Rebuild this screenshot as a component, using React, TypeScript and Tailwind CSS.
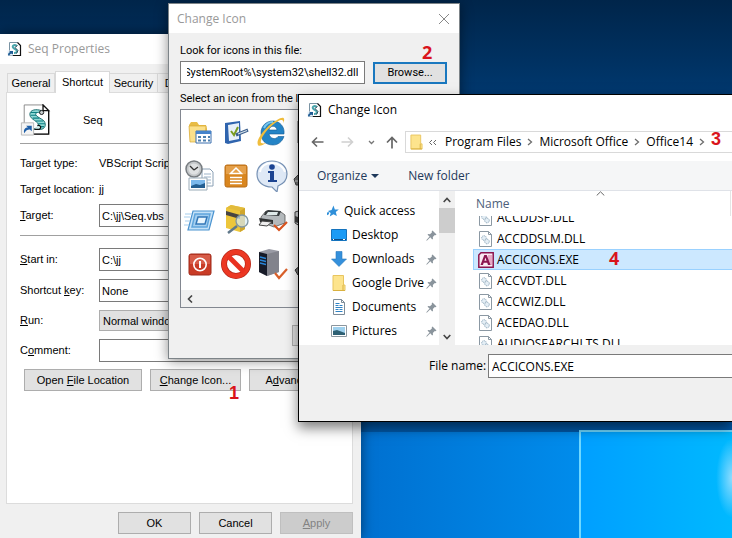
import { useEffect, useRef } from "react";
import type { ReactNode } from "react";

function ScriptIcon({ className }: { className: string }) {
  return (
    <svg viewBox="0 0 32 34" className={className}>
      <path d="M4 1h20l6 6v25H4z" fill="#fff" stroke="#888" />
      <path d="M30 7v25H5M24 1v6h6z" fill="none" stroke="#111" strokeWidth="1.4" />
      <path
        d="M22 7c-5-2-12-1-12 4 0 6 10 7 9 12-1 2-4 4-7 4h9c5 0 7-5 4-9-3-3-8-4-9-7 0-2 4-3 6-1z"
        fill="#8fd8d4"
        stroke="#186a6c"
      />
      <path d="M11 9h7M11 12h6M13 15h7M16 18h8M19 21h7M18 24h7" stroke="#0d7f82" strokeWidth="1.2" />
      <circle cx="22.500" cy="9" r="2.2" fill="#c9cfd0" stroke="#111" />
      <path d="M18 23c3-1 5 2 2 4h-5" fill="#d5f1ef" stroke="#111" strokeWidth="1.200" />
      <path d="M1 20h13v13H1z" fill="#f4f4f4" stroke="#b5b5b5" />
      <path d="M4 31c-1-4 1-6 4-6l-2-2h6v6l-2-2c-3 0-4 1-6 4z" fill="#1f5fa8" />
    </svg>
  );
}

function SmallScriptIcon() {
  return (
    <svg viewBox="0 0 15 16" className="h-4 w-[15px] shrink-0">
      <path d="M2.500 1.500h8l3 3v10h-11z" fill="#fff" stroke="#7a93a3" />
      <path d="M10.500 1.500l3 3v10H6" fill="none" stroke="#111" strokeWidth="1.200" />
      <path d="M10 5C7 3 5 5 6 6.500c1 1.500 4 2 4 3.500 0 1-1 2-3 2" fill="none" stroke="#4aa5ab" strokeWidth="2" />
      <path d="M10.500 4.500 8 6.500l3 3-1.500 3" fill="none" stroke="#234" strokeWidth=".8" />
      <path d="M.5 9.500h5v5h-5z" fill="#e9f1f7" />
      <path d="M1 14.500c0-2 .5-3 2-3.300L2.300 10H6v3.500l-1.200-.8c-1.500 0-2 .6-2.300 1.800z" fill="#1e5b93" />
    </svg>
  );
}

function Folder({ className }: { className: string }) {
  return (
    <svg viewBox="0 0 14 16" className={className}>
      <path d="M1 .5h10.500v9.500H13v5.500H1z" fill="#fde48d" stroke="#e8c55f" />
      <path d="M11 10v5.500M1 15.500h12" stroke="#d9b13f" />
    </svg>
  );
}

function FileIcon() {
  return (
    <svg viewBox="0 0 13 16" className="h-4 w-[13px]">
      <path d="M.5.5h9l3 3v12H.5z" fill="#fff" stroke="#8b98a3" />
      <path d="M9.500.5v3h3" fill="none" stroke="#8b98a3" />
      <circle cx="5" cy="7" r="2.300" fill="#e4eef5" stroke="#8aa5b8" strokeDasharray="1 .6" />
      <circle cx="8" cy="10.500" r="2.300" fill="#e4eef5" stroke="#8aa5b8" strokeDasharray="1 .6" />
    </svg>
  );
}

function AccessIcon() {
  return (
    <svg viewBox="0 0 16 16" className="h-4 w-4">
      <path d="M3 .8h12.200v14.400H.8V3z" fill="#fbeaf2" stroke="#8c1650" strokeWidth="1.500" />
      <path d="M10 3h4v10h-4z" fill="#e7a9c6" />
      <path d="M2.500 13 6.300 3h2.400L12.500 13H10l-.8-2.300H5.700L5 13zM6.400 8.800h2.100L7.500 5.500z" fill="#8c1650" />
    </svg>
  );
}

function Pin() {
  return (
    <svg viewBox="0 0 11 11" className="ml-auto h-[11px] w-[11px] shrink-0">
      <path d="M6.500.5 10.500 4.500 9.500 5.300 8.800 5 6.800 7 7 8.800 6.200 9.500 4.300 7.300.8 10.700.3 10.300 3.600 6.600 1.500 4.700 2.300 4 4 4.200 6 2.200 5.700 1.300z" fill="#8a949c" />
    </svg>
  );
}

function Chevron({ className = "" }: { className?: string }) {
  return (
    <svg viewBox="0 0 6 8" className={`h-2 w-[6px] shrink-0 ${className}`}>
      <path d="m1 1 3.500 3L1 7" fill="none" stroke="#6d6d6d" strokeWidth="1.300" />
    </svg>
  );
}

const systemIcons: { name: string; art: ReactNode }[] = [
  {
    name: "Programs folder",
    art: (
      <>
        <path d="M5 9l2-3h6l2 3h7l1 4v12H6z" fill="#e8bc45" />
        <path d="M5 10h17l-1 16H6z" fill="#fbe08a" stroke="#d8a935" strokeWidth=".7" />
        <path d="M12 15h15v12H12z" fill="#fff" stroke="#3b6fae" />
        <path d="M12 15h15v3H12z" fill="#4684cb" />
        <path d="M14 21h3m2 0h3m2 0h2M14 24.500h3m2 0h3m2 0h2" stroke="#4c7fae" strokeWidth="2" />
      </>
    ),
  },
  {
    name: "Default programs",
    art: (
      <>
        <path d="M5 7l15-2 1 20-13 3-3-1z" fill="#2f64ae" />
        <path d="M8 9l11-2v16l-10 2z" fill="#e7f0f9" />
        <path d="M11 15l3 4 4-8" fill="none" stroke="#7a9c21" strokeWidth="2" />
        <path d="M16 19l12-5" stroke="#3c5f8c" strokeWidth="3" />
        <path d="M18 18l9-3.500" stroke="#d8e4ee" strokeWidth="1.200" />
      </>
    ),
  },
  {
    name: "Internet Explorer",
    art: (
      <>
        <path
          d="M28 18H13c1 5 7 6 9 2.500h6C26 26 22 29 17 29 9 29 5 24 5 17S10 5 17 5s12 6 11 13zM13 14h8c-1-5-7-5-8 0z"
          fill="#2484c6"
          stroke="#155a93"
          strokeWidth=".6"
        />
        <path d="M8 12c2-4 5-6 9-6" fill="none" stroke="#77c7ee" strokeWidth="2" />
        <path d="M27 8c3-7 0-8-6-4C11 9-1 24 2 29c1 2 5 0 8-2-4 1-6 0-5-2C6 18 19 5 25 4c2 0 3 1 2 4z" fill="#f0bd3c" />
      </>
    ),
  },
  {
    name: "Disc",
    art: (
      <>
        <path d="M6 5h22v22H6z" fill="#a6a6a6" stroke="#555" />
        <path d="M9 9h15v14H9z" fill="#dce6ee" />
      </>
    ),
  },
  {
    name: "Recent items",
    art: (
      <>
        <path d="M18 9h8l3 3v14H18z" fill="#fff" stroke="#8aa0b5" />
        <path d="M20 14h7m-7 3h7m-7 3h7m-4 3h4" stroke="#9db3c8" />
        <circle cx="10" cy="9" r="8" fill="#c4c7c9" stroke="#777c80" strokeWidth="1.500" />
        <circle cx="10" cy="9" r="5.500" fill="#dfe1e2" />
        <path d="M10 10l4-3m-4 3L6 6" stroke="#333" strokeWidth="1.300" />
        <path d="M5 18h18v12H5z" fill="#fff" stroke="#9aabb8" />
        <path d="M7 20h14v8H7z" fill="#7bb8ec" />
        <path d="M7 26l5-2 4 1 5-2v5H7z" fill="#245e91" />
      </>
    ),
  },
  {
    name: "Eject",
    art: (
      <>
        <rect x="5" y="5" width="22" height="22" rx="2" fill="#d9861f" stroke="#b96c16" />
        <path d="M6 6h20v8H6z" fill="#e5a04a" />
        <path d="M16 8l5.500 5.500h-11z" fill="none" stroke="#fff" strokeWidth="1.500" />
        <path d="M10 17.500h12M10 20.500h12M10 23.500h12" stroke="#fff" strokeWidth="1.500" />
      </>
    ),
  },
  {
    name: "Information",
    art: (
      <>
        <path d="M16 1c8 0 15 5 15 13 0 6-4 10-9 12l-1 6-5-5C7 27 1 22 1 14S8 1 16 1z" fill="#dfe9f6" stroke="#7792b5" strokeWidth="1.200" />
        <path d="M4 12C5 6 10 3 16 3s12 4 13 9" fill="none" stroke="#fff" strokeWidth="2" />
        <circle cx="16" cy="7" r="2.800" fill="#1b4391" />
        <path d="M12 11h6v9h3v2h-9v-2h2v-7h-2z" fill="#1b4391" />
      </>
    ),
  },
  {
    name: "Drive",
    art: (
      <>
        <path d="M2 19l8-8h17l3 8v6H4z" fill="#777" stroke="#444" />
        <path d="M3 21h26" stroke="#ddd" />
      </>
    ),
  },
  {
    name: "Run",
    art: (
      <>
        <path d="M9 7h21l-5 19H4z" fill="#c5e2f8" stroke="#4b94d0" strokeWidth="1.200" />
        <path d="M11 10h15l-3 13H8z" fill="#a4cff0" stroke="#5fa5dc" strokeWidth="1.500" />
        <path d="M14 13h9l-2 7h-9z" fill="#e8f5fd" stroke="#3378b8" strokeWidth="1.500" />
        <path d="M1 10h7M0 13h6M1 17h5M0 21h5" stroke="#a5cdec" />
      </>
    ),
  },
  {
    name: "Search",
    art: (
      <>
        <path d="M6 4l5-3 14 3v21l-5 3-14-4z" fill="#edc63b" />
        <path d="M6 4l5-3 14 3-5 3z" fill="#e2bb3c" />
        <path d="M6 7l14 4v4L6 11z" fill="#484542" />
        <path d="M20 7l5-3v21l-5 3z" fill="#d0a62c" />
        <circle cx="22" cy="17" r="6" fill="#d9edf5" fillOpacity=".7" stroke="#8097a4" strokeWidth="1.300" />
        <path d="M17 22l-9 7" stroke="#60788a" strokeWidth="2.500" />
      </>
    ),
  },
  {
    name: "Default printer",
    art: (
      <>
        <path d="M5 13l5-6 15 1 4 3v8l-11 4L5 18z" fill="#b4b9bc" stroke="#555" strokeWidth=".8" />
        <path d="M9 8l3-2 13 1-2 5-15-1z" fill="#363b3d" />
        <path d="M12 8h10l-1 3H10z" fill="#dfe9e9" />
        <path d="M3 14l14 2v4L4 18z" fill="#2f3233" />
        <path d="M6 17l10 1-5 4-8-1z" fill="#eee" stroke="#444" />
        <path d="M18 21l5 5 8-8" fill="none" stroke="#d9531e" strokeWidth="2.200" />
      </>
    ),
  },
  {
    name: "Network printer",
    art: (
      <>
        <path d="M3 8l11-3 14 5v12l-14 4-11-7z" fill="#d3d6d8" stroke="#444" />
        <path d="M3 12l12 4v6L3 18z" fill="#444" />
      </>
    ),
  },
  {
    name: "Shut down",
    art: (
      <>
        <rect x="5" y="6" width="22" height="21" rx="2" fill="#c93c26" stroke="#9f2a1b" />
        <path d="M6 7h20v9H6z" fill="#d75c48" />
        <circle cx="16" cy="16.500" r="6.200" fill="none" stroke="#fff" strokeWidth="1.600" />
        <path d="M16 13v7" stroke="#fff" strokeWidth="2" />
      </>
    ),
  },
  {
    name: "Blocked",
    art: (
      <>
        <circle cx="16" cy="16" r="12" fill="#fff" stroke="#b7281a" strokeWidth="6" />
        <circle cx="16" cy="16" r="12" fill="none" stroke="#ec3823" strokeWidth="4.500" />
        <path d="M8 8l16 16" stroke="#e93120" strokeWidth="5" />
      </>
    ),
  },
  {
    name: "Default server",
    art: (
      <>
        <path d="M3 4l10-3 10 2v21l-12 4-8-4z" fill="#9a9ba5" />
        <path d="M3 4l8 2v22l-8-4z" fill="#171b28" />
        <path d="M11 6l12-3v21l-12 4z" fill="#82838c" />
        <path d="M4 9l6 1.500M4 12l6 1.500M4 15l6 1.500" stroke="#2a86d8" strokeWidth="1.300" />
        <path d="M19 25l4 5 8-9" fill="none" stroke="#d9602a" strokeWidth="2.200" />
      </>
    ),
  },
  {
    name: "Save to disk",
    art: (
      <>
        <path d="M3 22l8-7 17 3v9H6z" fill="#777" stroke="#333" />
        <path d="M8 10l5-3 7 4-6 4z" fill="#888" />
      </>
    ),
  },
];

const places: { name: string; icon: ReactNode }[] = [
  {
    name: "Desktop",
    icon: (
      <svg viewBox="0 0 16 16" className="h-4 w-4">
        <path d="M.5 2.500h15v11H.5z" fill="#1b9bf5" stroke="#1573bd" />
        <path d="M1 12.500h14" stroke="#0c4d86" />
        <path d="M2 12.500h1m9 0h2" stroke="#fff" />
      </svg>
    ),
  },
  {
    name: "Downloads",
    icon: (
      <svg viewBox="0 0 16 16" className="h-4 w-4">
        <path d="M5 .5h6V8h4.500L8 15.500.5 8H5z" fill="#3490dc" stroke="#2879bd" strokeWidth=".6" />
      </svg>
    ),
  },
  { name: "Google Drive", icon: <Folder className="mx-px h-4 w-[14px]" /> },
  {
    name: "Documents",
    icon: (
      <svg viewBox="0 0 16 16" className="h-4 w-4">
        <path d="M2.500.5h8l3 3v12h-11z" fill="#fff" stroke="#7d8c99" />
        <path d="M10.500.5v3h3" fill="none" stroke="#7d8c99" />
        <path d="M4.500 6.500h3m1 0h3M4.500 4.500h4M4.500 8.500h7M4.500 10.500h3m1 0h3M4.500 12.500h7" stroke="#2f83c5" />
      </svg>
    ),
  },
  {
    name: "Pictures",
    icon: (
      <svg viewBox="0 0 16 16" className="h-4 w-4">
        <path d="M.5 2.500h15v11H.5z" fill="#fff" stroke="#8b969e" />
        <path d="M2 4h12v8H2z" fill="#9fd1ee" />
        <path d="M2 8l4-1 8 3v2H2z" fill="#2e6073" />
      </svg>
    ),
  },
];

const files = [
  "ACCDDSF.DLL",
  "ACCDDSLM.DLL",
  "ACCICONS.EXE",
  "ACCVDT.DLL",
  "ACCWIZ.DLL",
  "ACEDAO.DLL",
  "AUDIOSEARCHLTS.DLL",
];

const sheetButton = "h-[22px] shrink-0 border border-[#adadad] bg-[#e1e1e1] text-center";
const sheetField = "h-[23px] w-full min-w-0 border border-[#7a7a7a] bg-white px-[2px] outline-none";
const sheetLabel = "w-[79px] shrink-0 pb-[2px]";

function PropertiesWindow() {
  return (
    <section className="absolute top-[34px] bottom-0 left-0 w-[361px] bg-[#f0f0f0] font-['Liberation_Sans',sans-serif] text-[11px] leading-4 text-black shadow-[0_0_12px_rgba(0,0,0,0.5)]">
      <header className="flex h-[30px] items-center gap-[6px] bg-white pl-[7px]">
        <SmallScriptIcon />
        <h1 className="font-['Open_Sans',sans-serif] text-xs text-[#999]">Seq Properties</h1>
      </header>
      <div className="pt-[7px] pr-2 pl-[6px]">
        <nav role="tablist" className="flex items-end pl-px">
          <button role="tab" className="h-[19px] w-12 border border-b-0 border-[#d9d9d9]">
            General
          </button>
          <button role="tab" aria-selected="true" className="-mb-px h-[22px] w-[55px] border border-b-0 border-[#d9d9d9] bg-white pb-[2px]">
            Shortcut
          </button>
          <button role="tab" className="h-[19px] w-12 border border-b-0 border-l-0 border-[#d9d9d9]">
            Security
          </button>
          <button role="tab" className="h-[19px] w-12 border border-b-0 border-l-0 border-[#d9d9d9]">
            Details
          </button>
        </nav>
        <form className="h-[412px] border border-[#dcdcdc] bg-white px-[13px] pt-[11px]">
          <div className="flex h-8 items-center gap-8">
            <ScriptIcon className="h-8 w-[31px]" />
            <span>Seq</span>
          </div>
          <hr className="mt-[7px] border-[#a0a0a0]" />
          <div className="mt-[6px] flex h-[26px] items-center">
            <span className="w-[79px]">Target type:</span>
            <span>VBScript Script File (.vbs)</span>
          </div>
          <div className="flex h-[26px] items-center">
            <span className="w-[79px]">Target location:</span>
            <span>jj</span>
          </div>
          <div className="mt-[2px] flex items-center">
            <label htmlFor="target" className={sheetLabel}>
              <u>T</u>arget:
            </label>
            <input id="target" className={sheetField} defaultValue="C:\jj\Seq.vbs" />
          </div>
          <hr className="mt-2 border-[#a0a0a0]" />
          <div className="mt-3 flex items-center">
            <label htmlFor="start" className={sheetLabel}>
              <u>S</u>tart in:
            </label>
            <input id="start" className={sheetField} defaultValue="C:\jj" />
          </div>
          <div className="mt-2 flex items-center">
            <label htmlFor="key" className={sheetLabel}>
              Shortcut <u>k</u>ey:
            </label>
            <input id="key" className={sheetField} defaultValue="None" />
          </div>
          <div className="mt-2 flex items-center">
            <label htmlFor="run" className={sheetLabel}>
              <u>R</u>un:
            </label>
            <select id="run" className="h-[21px] w-full appearance-none border border-[#adadad] bg-[#e1e1e1] px-[3px]">
              <option>Normal window</option>
              <option>Minimized</option>
              <option>Maximized</option>
            </select>
          </div>
          <div className="mt-2 flex items-center">
            <label htmlFor="comment" className={sheetLabel}>
              C<u>o</u>mment:
            </label>
            <input id="comment" className={sheetField} />
          </div>
          <div className="mt-[7px] flex gap-2 pl-1">
            <button type="button" className={`${sheetButton} w-[118px]`}>
              Open <u>F</u>ile Location
            </button>
            <button type="button" className={`${sheetButton} w-[91px]`}>
              <u>C</u>hange Icon...
            </button>
            <button type="button" className={`${sheetButton} w-[91px]`}>
              A<u>d</u>vanced...
            </button>
          </div>
        </form>
        <div className="mt-2 flex justify-end gap-2">
          <button className={`${sheetButton} w-[73px]`}>OK</button>
          <button className={`${sheetButton} w-[73px]`}>Cancel</button>
          <button disabled className="h-[22px] w-[73px] border border-[#bfbfbf] bg-[#ccc] text-[#838383]">
            <u>A</u>pply
          </button>
        </div>
      </div>
    </section>
  );
}

function ChangeIconWindow() {
  const path = useRef<HTMLInputElement>(null);

  // keep the end of the path in view
  useEffect(() => {
    if (path.current) path.current.scrollLeft = path.current.scrollWidth;
  }, []);

  return (
    <section className="absolute top-[3px] left-[168px] w-[292px] border border-[#7d8488] bg-[#f0f0f0] font-['Roboto',sans-serif] text-[11px] leading-4 text-black shadow-[0_2px_12px_rgba(0,0,0,0.45)]">
      <header className="flex h-[29px] items-center justify-between bg-white pr-[9px] pl-2">
        <h2 className="font-['Open_Sans',sans-serif] text-xs text-[#999]">Change Icon</h2>
        <button aria-label="Close">
          <svg viewBox="0 0 12 12" className="h-3 w-3">
            <path d="m1 1 10 10M11 1 1 11" stroke="#888" />
          </svg>
        </button>
      </header>
      <div className="pt-[10px] pr-3 pb-3 pl-[11px]">
        <label htmlFor="path" className="block">
          Look for icons in this file:
        </label>
        <div className="mt-[2px] flex items-center gap-2">
          <input
            id="path"
            ref={path}
            className="h-[23px] min-w-0 flex-1 border border-[#7a7a7a] bg-white px-[6px] outline-none"
            defaultValue="%SystemRoot%\system32\shell32.dll"
          />
          <button className="h-[22px] w-[74px] border-2 border-[#1a78bf] bg-[#e1e1e1]">Browse...</button>
        </div>
        <p className="mt-[7px]">Select an icon from the list below:</p>
        <div className="mt-[2px] border border-[#828790] bg-white">
          <ul className="grid h-[180px] grid-cols-[repeat(4,36px)] content-start pl-px">
            {systemIcons.map((icon) => (
              <li key={icon.name} className="flex h-11 items-center justify-center">
                <svg viewBox="0 0 32 32" role="img" aria-label={icon.name} className="h-8 w-8">
                  {icon.art}
                </svg>
              </li>
            ))}
          </ul>
          <div className="flex h-[17px] items-center bg-[#f0f0f0] pl-[6px]">
            <svg viewBox="0 0 6 8" className="h-2 w-[6px]">
              <path d="M5 .5 1.500 4 5 7.500" fill="none" stroke="#444" strokeWidth="1.600" />
            </svg>
          </div>
        </div>
        <div className="mt-[17px] flex justify-end gap-[7px]">
          <button className="h-[21px] w-[74px] border border-[#adadad] bg-[#e1e1e1]">OK</button>
          <button className="h-[21px] w-[74px] border border-[#adadad] bg-[#e1e1e1]">Cancel</button>
        </div>
      </div>
    </section>
  );
}

function BrowseWindow() {
  return (
    <section className="absolute top-[94px] right-0 left-[298px] border border-r-0 border-black bg-white font-['Open_Sans',sans-serif] text-xs leading-4 text-black shadow-[0_6px_12px_rgba(0,0,0,0.5)]">
      <header className="flex h-[30px] items-center gap-[6px] pl-2">
        <SmallScriptIcon />
        <h2>Change Icon</h2>
      </header>
      <div className="flex h-9 items-center pt-[6px] pb-2 pl-3">
        <button aria-label="Back" className="mr-[17px]">
          <svg viewBox="0 0 13 12" className="h-3 w-[13px]">
            <path d="M6 1.500 1.500 6 6 10.500M1.500 6H12.500" fill="none" stroke="#666" strokeWidth="1.600" />
          </svg>
        </button>
        <button aria-label="Forward" className="mr-[14px]">
          <svg viewBox="0 0 13 12" className="h-3 w-[13px]">
            <path d="m7 1.500 4.500 4.500L7 10.500M11.500 6H.5" fill="none" stroke="#d0d0d0" strokeWidth="1.600" />
          </svg>
        </button>
        <button aria-label="Recent locations" className="mr-[11px]">
          <svg viewBox="0 0 7 5" className="h-[5px] w-[7px]">
            <path d="m1 1 2.500 2.500L6 1" fill="none" stroke="#777" strokeWidth="1.300" />
          </svg>
        </button>
        <button aria-label="Up" className="mr-[7px]">
          <svg viewBox="0 0 12 13" className="h-[13px] w-3">
            <path d="M1 6.500 6 1.500l5 5M6 1.500v11" fill="none" stroke="#666" strokeWidth="1.700" />
          </svg>
        </button>
        <div className="flex h-[22px] min-w-0 flex-1 items-center border border-r-0 border-[#d9d9d9] pl-1 whitespace-nowrap">
          <Folder className="mr-[5px] h-4 w-[13px] shrink-0" />
          <svg viewBox="0 0 9 7" className="mr-2 h-[7px] w-[9px] shrink-0">
            <path d="M4 1 1.500 3.500 4 6M8 1 5.500 3.500 8 6" fill="none" stroke="#666" />
          </svg>
          <a href="#program-files">Program Files</a>
          <Chevron className="mx-[6px]" />
          <a href="#office">Microsoft Office</a>
          <Chevron className="mx-[6px]" />
          <a href="#office14">Office14</a>
          <Chevron className="ml-[6px]" />
        </div>
      </div>
      <div className="flex h-[30px] items-center border-b border-[#dfe2e8] bg-[#f5f6f7] pl-[18px] text-[#1e395b]">
        <button className="flex items-center gap-1">
          Organize
          <svg viewBox="0 0 8 4" className="h-1 w-2">
            <path d="M0 0h8L4 4z" fill="#1e395b" />
          </svg>
        </button>
        <button className="ml-[29px]">New folder</button>
      </div>
      <div className="flex h-[154px]">
        <nav className="flex w-[140px] flex-col pt-2 pl-7">
          <a href="#quick" className="flex h-6 items-center gap-[5px]">
            <svg viewBox="0 0 13 13" className="h-[13px] w-3">
              <path d="M7 0l1.500 4.200 4.300.2-3.300 2.700 1.200 4.400L7 9.500 3 12l1-4L1 6l4-1zM0 7.500l2.500-.5L2 9.500 0 10.500z" fill="#2e8fd9" />
            </svg>
            Quick access
          </a>
          {places.map((place) => (
            <a href="#place" key={place.name} className="flex h-6 items-center pr-[2px] pl-1 whitespace-nowrap">
              <span className="mr-[5px] w-4 shrink-0">{place.icon}</span>
              {place.name}
              <Pin />
            </a>
          ))}
        </nav>
        <div className="flex w-4 flex-col items-center bg-[#f0f0f0] pt-[6px] pb-[5px]">
          <svg viewBox="0 0 8 6" className="h-[6px] w-2">
            <path d="M.7 5 4 1.500 7.300 5" fill="none" stroke="#444" strokeWidth="1.600" />
          </svg>
          <div className="mt-[5px] h-[25px] w-full bg-[#cdcdcd]" />
          <svg viewBox="0 0 8 6" className="mt-auto h-[6px] w-2">
            <path d="M.7 1 4 4.500 7.300 1" fill="none" stroke="#444" strokeWidth="1.600" />
          </svg>
        </div>
        <div className="flex min-w-0 flex-1 flex-col pl-[18px]">
          <div className="mr-px flex h-[25px] shrink-0 border-r border-[#e5e5e5] text-[#4c607a]">
            <span className="w-[123px] pt-[5px] pl-[3px]">Name</span>
            <svg viewBox="0 0 9 5" className="h-[5px] w-[9px]">
              <path d="M.7 4.500 4.500.8l3.800 3.700" fill="none" stroke="#666" />
            </svg>
          </div>
          <ul className="flex min-h-0 flex-1 flex-col justify-center overflow-hidden">
            {files.map((file) => (
              <li
                key={file}
                className={
                  file === "ACCICONS.EXE"
                    ? "flex h-[21px] shrink-0 items-center border border-r-0 border-[#99d1ff] bg-[#cce8ff]"
                    : "flex h-[21px] shrink-0 items-center border border-transparent"
                }
              >
                <span className="flex w-[23px] justify-center">
                  {file.endsWith(".EXE") ? <AccessIcon /> : <FileIcon />}
                </span>
                {file}
              </li>
            ))}
          </ul>
        </div>
      </div>
      <footer className="flex h-[76px] items-start bg-[#f0f0f0] pt-[9px] pl-[130px]">
        <label htmlFor="file-name" className="w-[59px] pt-1">
          File name:
        </label>
        <input id="file-name" className="h-6 min-w-0 flex-1 border border-r-0 border-[#7a7a7a] bg-white px-[3px] outline-none" defaultValue="ACCICONS.EXE" />
      </footer>
    </section>
  );
}

export default function App() {
  return (
    <main className="relative h-screen overflow-hidden bg-linear-to-b from-[#00254a] from-0% via-[#003b74] via-20% to-[#0058a8] to-80%">
      <div className="absolute top-[432px] right-0 bottom-0 left-[361px] bg-linear-to-r from-[#0070d0] to-[#00a0ff]" />
      <div className="absolute top-[430px] right-0 bottom-0 left-[579px] border-t-2 border-l-2 border-[#6fd8ff] bg-linear-to-r from-[#009fff] to-[#00b9ff]" />
      <div className="absolute right-0 bottom-[20px] h-[80px] w-4 bg-radial-[at_100%_50%] from-[#8fdcff] to-transparent to-70%" />
      <PropertiesWindow />
      <ChangeIconWindow />
      <BrowseWindow />
      <div className="text-lg leading-5 font-bold text-[#d9141c]">
        <span className="absolute top-[383px] left-[229px] font-['Liberation_Sans',sans-serif]">1</span>
        <span className="absolute top-[42px] left-[422px] font-['Noto_Sans',sans-serif]">2</span>
        <span className="absolute top-[129px] left-[711px] font-['Liberation_Sans',sans-serif]">3</span>
        <span className="absolute top-[248px] left-[609px] font-['Noto_Sans',sans-serif]">4</span>
      </div>
    </main>
  );
}
